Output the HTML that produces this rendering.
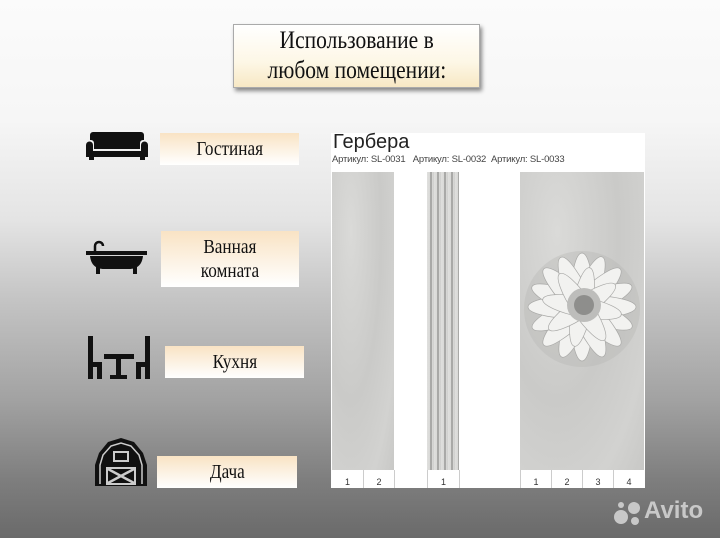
<!DOCTYPE html>
<html><head><meta charset="utf-8"><style>
*{margin:0;padding:0;box-sizing:border-box}
body{width:720px;height:538px;overflow:hidden;position:relative;font-family:"Liberation Serif",serif;
background:linear-gradient(to bottom,#fbfbfb 0px,#f6f6f6 120px,#e4e4e4 220px,#c4c4c4 300px,#a2a2a2 400px,#7e7e7e 480px,#6a6a6a 538px);}
.box{position:absolute;background:linear-gradient(to bottom,#f9e3c4,#fdf7ee 70%,#fff);text-align:center;color:#111;font-size:20px;display:flex;align-items:center;justify-content:center;line-height:24px}
.box span,.box div{display:inline-block;transform:scaleX(.86);white-space:nowrap}
.title{left:233px;top:24px;width:247px;height:64px;font-size:25px;line-height:30px;border:1px solid #aaa;box-shadow:2px 3px 4px rgba(0,0,0,.45);flex-direction:column;background:linear-gradient(to bottom,#fff,#fdf7e6 60%,#f7e8c4)}
.panel{position:absolute;left:331px;top:133px;width:314px;height:355px;background:#fff;font-family:"Liberation Sans",sans-serif}
.tile{position:absolute;top:39px;height:298px;background:radial-gradient(ellipse at 30% 20%,#dadad8,#cacac8 50%,#d2d2d0 80%,#c8c8c6)}
.num{position:absolute;top:337px;height:18px;font-size:9px;color:#333;text-align:center;line-height:24px;border-left:1px solid #ccc}
svg{position:absolute}
</style></head><body>
<div class="box title"><div>Использование в</div><div>любом помещении:</div></div>
<div class="box" style="left:160px;top:133px;width:139px;height:32px"><span>Гостиная</span></div>
<div class="box" style="left:161px;top:231px;width:138px;height:56px;flex-direction:column"><div>Ванная</div><div>комната</div></div>
<div class="box" style="left:165px;top:346px;width:139px;height:32px"><span>Кухня</span></div>
<div class="box" style="left:157px;top:456px;width:140px;height:32px"><span>Дача</span></div>

<svg style="left:86px;top:131px" width="62" height="30" viewBox="0 0 62 30"><path d="M7 1h48a3 3 0 0 1 3 3v5h-1a3 3 0 0 0-3 3v6H8v-6a3 3 0 0 0-3-3H4V4a3 3 0 0 1 3-3z" fill="#111"/><path d="M0 14a3.5 3.5 0 0 1 7 0v6h48v-6a3.5 3.5 0 0 1 7 0v12H0z" fill="#111"/><rect x="3" y="25" width="5" height="4" fill="#111"/><rect x="54" y="25" width="5" height="4" fill="#111"/></svg>
<svg style="left:85px;top:240px" width="64" height="36" viewBox="0 0 64 36"><path d="M10 12V6a4 4 0 0 1 8 0" stroke="#111" stroke-width="2.5" fill="none"/><rect x="1" y="11" width="61" height="4" fill="#111"/><path d="M5 16h53c-1 9-6 13-14 13H19C11 29 6 25 5 16z" fill="#111"/><rect x="11" y="27" width="4" height="7" fill="#111"/><rect x="48" y="27" width="4" height="7" fill="#111"/></svg>
<svg style="left:87px;top:336px" width="64" height="44" viewBox="0 0 64 44"><g fill="#111"><rect x="1" y="0" width="5" height="43"/><rect x="1" y="26" width="14" height="5"/><rect x="10" y="26" width="5" height="17"/><rect x="58" y="0" width="5" height="43"/><rect x="49" y="26" width="14" height="5"/><rect x="49" y="26" width="5" height="17"/><rect x="17" y="18" width="30" height="5"/><rect x="29" y="18" width="5" height="25"/><rect x="23" y="39" width="17" height="4"/></g></svg>
<svg style="left:94px;top:437px" width="54" height="50" viewBox="0 0 54 50"><path d="M27 1L14 5 5 16 1 28v21h52V28L49 16 40 5z" fill="#111"/><path d="M6 47V28l3-10 8-9 10-3 10 3 8 9 3 10v19" stroke="#ccc" stroke-width="1.5" fill="none"/><rect x="19" y="14" width="16" height="11" fill="#ccc"/><rect x="21" y="16" width="12" height="7" fill="#111"/><rect x="12" y="30" width="30" height="18" fill="#ccc"/><rect x="14" y="32" width="26" height="14" fill="#111"/><path d="M14 32L40 46M40 32L14 46" stroke="#ccc" stroke-width="2.5"/></svg>

<div class="panel">
<div style="position:absolute;left:2px;top:-2px;font-size:20px;color:#222">Гербера</div>
<div style="position:absolute;left:1px;top:21px;font-size:9.5px;color:#444;white-space:nowrap;letter-spacing:-.2px">Артикул: SL-0031&nbsp;&nbsp;&nbsp;Артикул: SL-0032&nbsp;&nbsp;Артикул: SL-0033</div>
<div class="tile" style="left:1px;width:62px"></div>
<div class="tile" style="left:96px;width:32px;background:repeating-linear-gradient(to right,#e0e0de 0,#d8d8d6 3px,#7a7a78 4px,#d8d8d6 5px,#cfcfcd 7px)"></div>
<div class="tile" style="left:189px;width:124px"></div>
<svg style="left:189px;top:114px" width="125" height="122" viewBox="0 0 125 122">
<circle cx="62" cy="62" r="58" fill="#b4b4b2" opacity=".35"/>
<g fill="#f2f2f0" stroke="#a8a8a6" stroke-width=".7">
<g transform="translate(62 60)">
<ellipse rx="12" ry="54" transform="rotate(0)"/><ellipse rx="12" ry="54" transform="rotate(22)"/><ellipse rx="12" ry="54" transform="rotate(45)"/><ellipse rx="12" ry="54" transform="rotate(67)"/><ellipse rx="12" ry="54" transform="rotate(90)"/><ellipse rx="12" ry="54" transform="rotate(112)"/><ellipse rx="12" ry="54" transform="rotate(135)"/><ellipse rx="12" ry="54" transform="rotate(157)"/>
<ellipse rx="10" ry="40" transform="rotate(11)"/><ellipse rx="10" ry="40" transform="rotate(56)"/><ellipse rx="10" ry="40" transform="rotate(101)"/><ellipse rx="10" ry="40" transform="rotate(146)"/>
</g></g>
<circle cx="64" cy="58" r="17" fill="#bdbdbb"/><circle cx="64" cy="58" r="10" fill="#8e8e8c"/></svg>
<div class="num" style="left:1px;width:31px;border:none">1</div>
<div class="num" style="left:32px;width:31px">2</div>
<div class="num" style="left:63px;width:1px"></div>
<div class="num" style="left:96px;width:32px">1</div>
<div class="num" style="left:128px;width:1px"></div>
<div class="num" style="left:189px;width:31px">1</div>
<div class="num" style="left:220px;width:31px">2</div>
<div class="num" style="left:251px;width:31px">3</div>
<div class="num" style="left:282px;width:31px">4</div>
</div>

<svg style="left:613px;top:500px" width="30" height="26" viewBox="0 0 30 26"><g fill="#c8c8c8"><circle cx="8" cy="17" r="7"/><circle cx="21" cy="8" r="6"/><circle cx="22" cy="21" r="4"/><circle cx="8" cy="5" r="3"/></g></svg>
<div style="position:absolute;left:644px;top:497px;font:bold 24px 'Liberation Sans',sans-serif;color:#c8c8c8">Avito</div>
</body></html>
